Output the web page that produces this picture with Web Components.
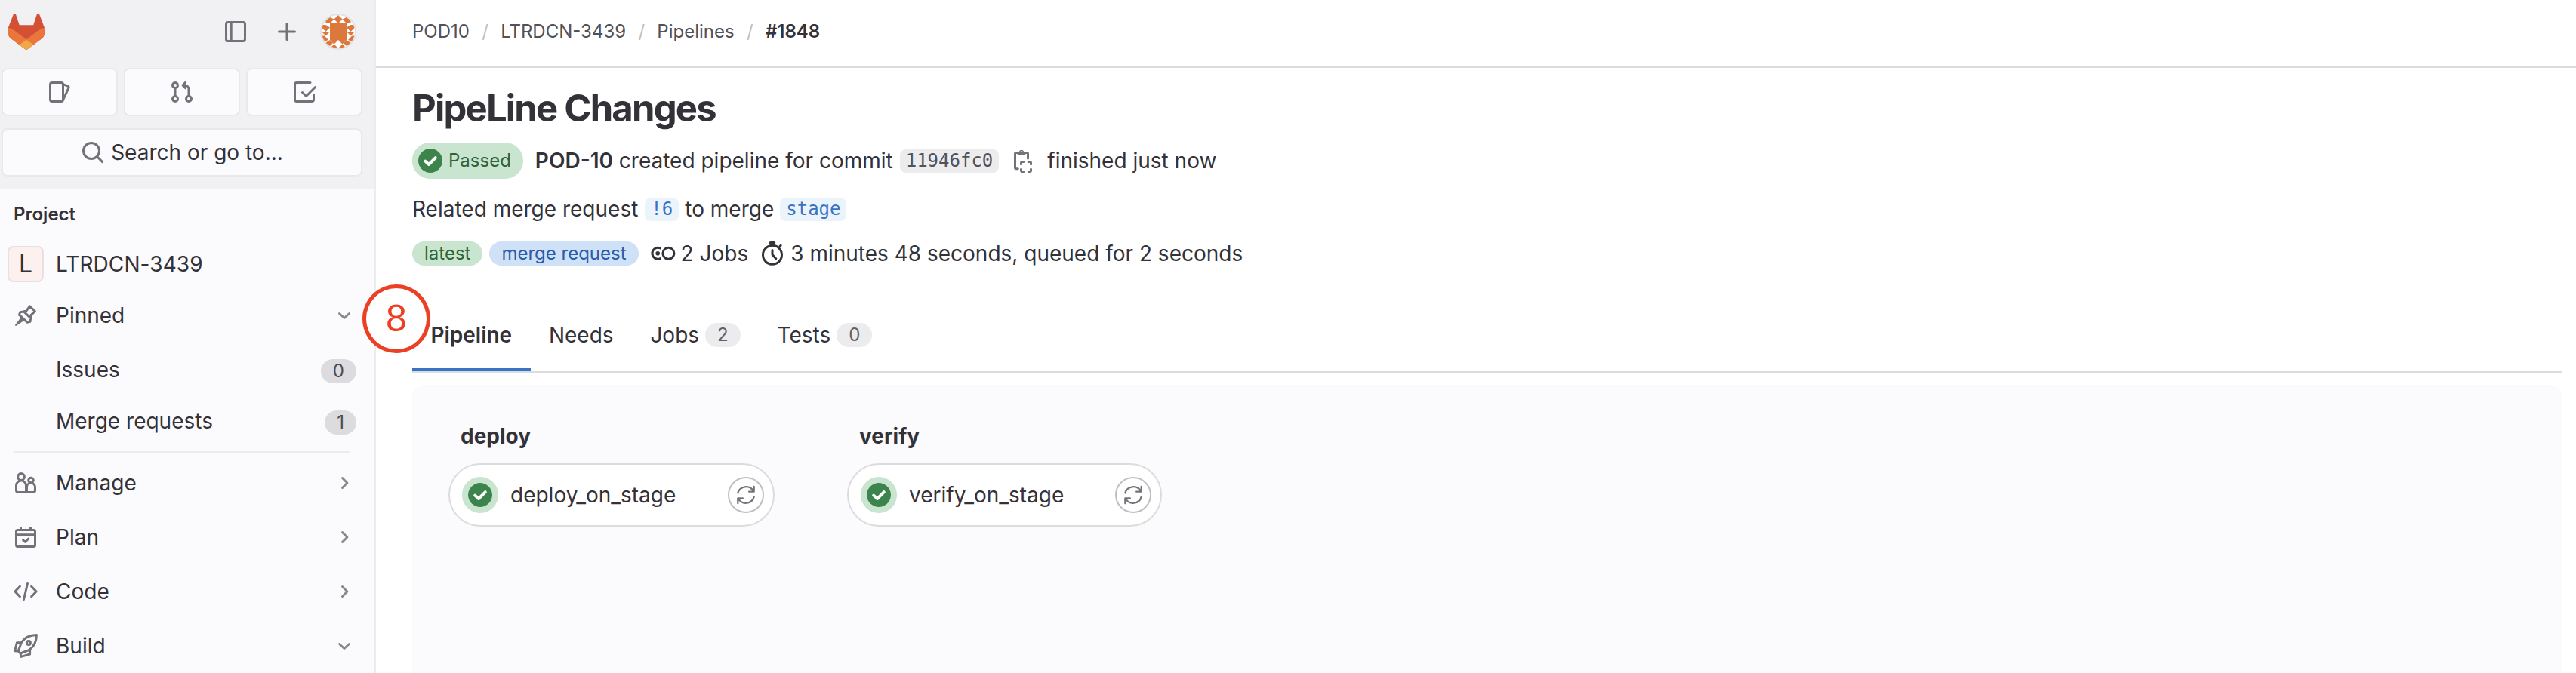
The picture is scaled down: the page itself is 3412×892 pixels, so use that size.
<!DOCTYPE html>
<html lang="en">
<head>
<meta charset="utf-8">
<title>PipeLine Changes</title>
<style>
  body {
    margin: 0;
    background: #fff;
    color: #333238;
    font-family: Inter, "Liberation Sans", sans-serif;
    font-size: 28px;
    line-height: 40px;
  }
</style>
</head>
<body>
<gl-app></gl-app>

<script>
// inner markup of every icon, all on a 16x16 grid
const ICONS = {
  'panel': '<rect x="1.75" y="1.75" width="12.5" height="12.5" rx="1.25"/><path d="M5.1 2v12"/>',
  'plus': '<path d="M8 2.75v10.5M2.75 8h10.5"/>',
  'issues': '<rect x="1.75" y="1.75" width="8.5" height="12.5" rx="1.25"/><path d="m10.5 2.9 2.9 1.2a1 1 0 0 1 .5 1.3l-3.3 7.2"/>',
  'merge': '<circle cx="3.5" cy="3.5" r="1.75"/><circle cx="3.5" cy="12.5" r="1.75"/><circle cx="12.5" cy="12.5" r="1.75"/><path d="M3.5 5.25v5.5M12.5 10.75V6A2.5 2.5 0 0 0 10 3.5H8.7M10.3 1.7 8.5 3.5l1.8 1.8"/>',
  'todo': '<path d="M12 1.75H3A1.25 1.25 0 0 0 1.75 3v10c0 .7.55 1.25 1.25 1.25h10c.7 0 1.25-.55 1.25-1.25v-3.2M6.75 8.25l2.5 2.5 6-6"/>',
  'search': '<circle cx="7" cy="7" r="5.25"/><path d="m10.9 10.9 3.4 3.4"/>',
  'pin': '<path d="m10.7 1.9 3.5 3.4-2.6 2.4-.6 4.4-2 .5-5.3-5 .7-1.7 4-.8zM7 5.7l4.6 4.4"/><path d="m1.5 14.5 3.9-5.1 1.5 1.4z" fill="currentColor" stroke-width="1"/>',
  'users': '<circle cx="5" cy="4" r="2.2"/><path d="M1.75 13V9.8a3.25 3.25 0 0 1 6.5 0v4.4H3A1.25 1.25 0 0 1 1.75 13zM8.8 14.25h4.2c.7 0 1.25-.55 1.25-1.25v-2.2a2.75 2.75 0 0 0-5.5 0v3.2"/><circle cx="11.5" cy="6.3" r="1.65"/>',
  'calendar': '<rect x="1.75" y="3.25" width="12.5" height="11" rx="1"/><path d="M1.75 6.4h12.5M4.75 1.75v1.5M11.25 1.75v1.5M6.3 9.9l1.4 1.3 2.2-2.2"/>',
  'code': '<path d="M4.2 4.6.95 8l3.25 3.4M11.8 4.6 15.05 8l-3.25 3.4M9.25 2.75l-2.5 10.5"/>',
  'rocket': '<path d="M5.2 5.7C7.3 2.6 10.6.9 15.2.8c0 4.4-1.7 7.7-4.8 9.9L4.5 13 3.1 11.4zM5.2 5.7l-3 .2L.8 11.4l2.3.1M10.8 10.6v2.9L5 15.2 4.5 13"/><circle cx="10" cy="6" r="1.2"/>',
  'chevron-down': '<path d="m4.75 6.75 3.25 3 3.25-3"/>',
  'chevron-right': '<path d="m6.75 4.75 3.2 3.25-3.2 3.25"/>',
  'copy': '<path d="M4.6 13.4H3.5a.75.75 0 0 1-.75-.75V3.45a.75.75 0 0 1 .75-.75h7a.75.75 0 0 1 .75.75v3.1"/><path d="M4.4 4.4V2h1a1.7 1.7 0 0 1 3.2 0h1v2.4zM7 1.6a.85.85 0 1 0 0 1.7.85.85 0 0 0 0-1.7z" fill="currentColor" fill-rule="evenodd" stroke="none"/><path d="M6.75 10.4v-.9c0-.4.35-.75.75-.75h.9M11.6 8.75h.9c.4 0 .75.35.75.75v.9M13.25 13.6v.9c0 .4-.35.75-.75.75h-.9M8.4 15.25h-.9a.75.75 0 0 1-.75-.75v-.9"/>',
  'jobs': '<circle cx="11.7" cy="7.9" r="3.75"/><path d="M6.3 4.5a3.75 3.75 0 1 0 0 6.8"/><circle cx="4.6" cy="7.9" r="1.4" fill="currentColor" stroke="none"/>',
  'timer': '<circle cx="8" cy="8.9" r="6.25"/><path d="M8 5.8v2.9l2.4 2.7M12.9 3.3l.7-.7"/><path d="M6.8.9h2.4M8 1v1.4" stroke-width="1.9"/>',
  'retry': '<path d="M2.3 6.6a6 6 0 0 1 11-1.3M13.7 2v3.7H10.2M13.7 9.4a6 6 0 0 1-11 1.3M2.3 14v-3.7h3.5"/>',
  'check': '<path d="m4.6 8.3 2.4 2.2 4.4-4.4"/>'
};

class GlIcon extends HTMLElement {
  connectedCallback() {
    const size = this.getAttribute('size') || 32;
    const weight = this.getAttribute('weight') || 1.5;
    this.attachShadow({ mode: 'open' }).innerHTML = `
      <style>
        :host { display: block; flex: none; width: ${size}px; height: ${size}px; color: #737278; }
        svg { display: block; overflow: visible; }
      </style>
      <svg width="${size}" height="${size}" viewBox="0 0 16 16" fill="none" stroke="currentColor"
        stroke-width="${weight}" stroke-linecap="round" stroke-linejoin="round">${ICONS[this.getAttribute('name')]}</svg>`;
  }
}

class GlLogo extends HTMLElement {
  connectedCallback() {
    this.attachShadow({ mode: 'open' }).innerHTML = `
      <style>:host { display: block; width: 50px; height: 48px; } svg { display: block; }</style>
      <svg width="50" height="48" viewBox="0 0 25 24">
        <path fill="#d35034" d="m24.507 9.5-.034-.09L21.082.562a.896.896 0 0 0-1.694.091l-2.29 7.01H7.825L5.535.653a.898.898 0 0 0-1.694-.09L.451 9.411.416 9.5a6.297 6.297 0 0 0 2.09 7.278l.012.01.03.022 5.16 3.867 2.56 1.935 1.554 1.176a1.051 1.051 0 0 0 1.268 0l1.555-1.176 2.56-1.935 5.197-3.89.014-.01A6.297 6.297 0 0 0 24.507 9.5Z"/>
        <path fill="#ea763c" d="m24.507 9.5-.034-.09a11.44 11.44 0 0 0-4.56 2.051l-7.447 5.632 4.742 3.584 5.197-3.89.014-.01A6.297 6.297 0 0 0 24.507 9.5Z"/>
        <path fill="#efa747" d="m7.707 20.677 2.56 1.935 1.555 1.176a1.051 1.051 0 0 0 1.268 0l1.555-1.176 2.56-1.935-4.743-3.584-4.755 3.584Z"/>
        <path fill="#ea763c" d="M5.01 11.461a11.43 11.43 0 0 0-4.56-2.05L.416 9.5a6.297 6.297 0 0 0 2.09 7.278l.012.01.03.022 5.16 3.867 4.745-3.584-7.444-5.632Z"/>
      </svg>`;
  }
}

class GlIdenticon extends HTMLElement {
  connectedCallback() {
    this.attachShadow({ mode: 'open' }).innerHTML = `
      <style>
        :host { display: block; box-sizing: border-box; width: 48px; height: 48px; border: 2px solid #e2e1e6; border-radius: 50%; overflow: hidden; background: #fff; }
        svg { display: block; }
      </style>
      <svg width="44" height="44" viewBox="0 0 44 44" fill="#dd783c">
        <path d="M11 11h22v22l-5.5 5.5L22 33l-5.5 5.5L11 33z"/>
        <path d="m22 0 5.5 5.5L22 11l-5.5-5.5zM11 3l5.5 2.5L11 11H5.5V7zM33 3l-5.5 2.5L33 11h5.5V7zM0 13h5.5l5.500 3.5L5.5 22 0 16.5zM44 13h-5.5L33 16.5l5.5 5.5 5.5-5.5zM0 22h11l-5.500 5.500zM44 22H33l5.500 5.500zM0 27.5h4L9 33l-6 2zM44 27.5h-4L35 33l6 2zM11 33l4 4-5 5-5-5zM33 33l-4 4 5 5 5-5zM16.5 38.500 22 44H11zM27.5 38.500 22 44h11z"/>
      </svg>`;
  }
}

// small rounded counter, used in the side menu and in the tabs
class GlCount extends HTMLElement {
  connectedCallback() {
    this.attachShadow({ mode: 'open' }).innerHTML = `
      <style>
        :host { display: block; box-sizing: border-box; height: 32px; padding: 0 16px; border-radius: 16px; background: var(--count-bg, #dcdcde); color: var(--count-color, #4c4b51); font-size: 24px; line-height: 32px; font-weight: 400; }
      </style>
      <slot></slot>`;
  }
}

class GlNavItem extends HTMLElement {
  connectedCallback() {
    const icon = this.getAttribute('icon');
    const arrow = this.getAttribute('arrow');
    const count = this.getAttribute('count');
    this.attachShadow({ mode: 'open' }).innerHTML = `
      <style>
        :host { display: flex; align-items: center; height: var(--row, 72px); padding: 0 8px 0 18px; }
        .lead { width: 56px; flex: none; }
        .label { flex: 1; }
        .arrow { color: #89888d; }
        gl-count { position: relative; top: 2px; }
      </style>
      <div class="lead">${icon ? `<gl-icon name="${icon}"></gl-icon>` : ''}</div>
      <div class="label"><slot></slot></div>
      ${arrow ? `<gl-icon class="arrow" name="chevron-${arrow}"></gl-icon>` : ''}
      ${count ? `<gl-count>${count}</gl-count>` : ''}`;
  }
}

class GlSidebar extends HTMLElement {
  connectedCallback() {
    this.attachShadow({ mode: 'open' }).innerHTML = `
      <style>
        :host { display: block; box-sizing: border-box; width: 498px; height: 892px; overflow: hidden; background: #fbfafd; border-right: 2px solid #ececef; }
        header { box-sizing: border-box; height: 250px; background: #f1f0f3; padding: 18px 16px 0 2px; }
        .brand { display: flex; align-items: center; padding: 0 8px; height: 48px; }
        .brand gl-icon { margin-right: 36px; }
        .brand gl-icon + gl-icon { margin-right: 28px; }
        .space { flex: 1; }
        .tiles { display: grid; grid-template-columns: 1fr 1fr 1fr; gap: 8px; margin-top: 24px; }
        .tile { display: flex; align-items: center; justify-content: center; box-sizing: border-box; height: 64px; background: #fbfafd; border: 2px solid #e9e8ec; border-radius: 8px; }
        .search { margin-top: 16px; gap: 8px; }
        h2 { margin: 0; padding: 14px 18px 0; font-size: 24px; line-height: 40px; font-weight: 600; }
        .project { display: flex; align-items: center; height: 48px; padding: 0 10px; margin-top: 22px; gap: 16px; }
        .project span { letter-spacing: 0.1px; }
        .letter { box-sizing: border-box; width: 48px; height: 48px; border: 2px solid #ebdfdf; border-radius: 8px; background: #fcf1ef; text-align: center; font-size: 32px; line-height: 44px; }
        .pinned { --row: 68px; margin-top: 10px; padding-right: 16px; }
        hr { margin: 10px 32px 0 18px; border: 0; height: 2px; background: #ececef; }
        .menu { margin-top: 4px; padding-right: 16px; }
      </style>
      <header>
        <div class="brand">
          <gl-logo></gl-logo><span class="space"></span>
          <gl-icon name="panel"></gl-icon><gl-icon name="plus"></gl-icon>
          <gl-identicon></gl-identicon>
        </div>
        <div class="tiles">
          <div class="tile"><gl-icon name="issues"></gl-icon></div>
          <div class="tile"><gl-icon name="merge"></gl-icon></div>
          <div class="tile"><gl-icon name="todo"></gl-icon></div>
        </div>
        <div class="tile search"><gl-icon name="search"></gl-icon><span>Search or go to...</span></div>
      </header>
      <h2>Project</h2>
      <div class="project"><div class="letter">L</div><span>LTRDCN-3439</span></div>
      <div class="pinned">
        <gl-nav-item icon="pin" arrow="down">Pinned</gl-nav-item>
        <gl-nav-item style="--row: 76px" count="0">Issues</gl-nav-item>
        <gl-nav-item style="--row: 60px" count="1">Merge requests</gl-nav-item>
      </div>
      <hr>
      <nav class="menu">
        <gl-nav-item icon="users" arrow="right">Manage</gl-nav-item>
        <gl-nav-item icon="calendar" arrow="right">Plan</gl-nav-item>
        <gl-nav-item icon="code" arrow="right">Code</gl-nav-item>
        <gl-nav-item icon="rocket" arrow="down">Build</gl-nav-item>
      </nav>`;
  }
}

class GlBreadcrumbs extends HTMLElement {
  connectedCallback() {
    this.attachShadow({ mode: 'open' }).innerHTML = `
      <style>
        :host { display: flex; box-sizing: border-box; height: 90px; padding: 22px 48px 0; gap: 16.3px; border-bottom: 2px solid #dcdcde; color: #535158; font-size: 24px; }
        i { font-style: normal; color: #bfbfc3; }
        b { font-weight: 600; color: #333238; }
      </style>
      <span>POD10</span><i>/</i><span>LTRDCN-3439</span><i>/</i><span>Pipelines</span><i>/</i><b>#1848</b>`;
  }
}

class GlBadge extends HTMLElement {
  connectedCallback() {
    this.attachShadow({ mode: 'open' }).innerHTML = `
      <style>
        :host { display: block; height: 32px; padding: 0 16px; border-radius: 16px; font-size: 24px; line-height: 32px; background: #c9e5cf; color: #2f6339; }
        :host([variant="info"]) { background: #cfe1f7; color: #2a5caa; }
      </style>
      <slot></slot>`;
  }
}

class GlCode extends HTMLElement {
  connectedCallback() {
    this.attachShadow({ mode: 'open' }).innerHTML = `
      <style>
        :host { display: block; height: 31px; padding: 0 8px; border-radius: 8px; font: 24px/31px "DejaVu Sans Mono", monospace; background: #ececef; color: #535158; }
        :host([link]) { background: #ebf3fb; color: #3973c6; }
      </style>
      <slot></slot>`;
  }
}

// green disc with a tick and a paler ring around it
class GlStatus extends HTMLElement {
  connectedCallback() {
    this.attachShadow({ mode: 'open' }).innerHTML = `
      <style>
        :host { display: block; flex: none; border-radius: 50%; border: 8px solid #c9e5cf; }
        div { width: 32px; height: 32px; border-radius: 50%; background: #3c844c; }
        gl-icon { color: #fff; }
      </style>
      <div><gl-icon name="check" weight="2"></gl-icon></div>`;
  }
}

class GlPipelineHeader extends HTMLElement {
  connectedCallback() {
    this.attachShadow({ mode: 'open' }).innerHTML = `
      <style>
        :host { display: block; padding: 0 48px; }
        h1 { margin: 0; padding-top: 24px; font-size: 49px; line-height: 60px; font-weight: 700; letter-spacing: -1.8px; }
        .row { display: flex; align-items: center; white-space: nowrap; }
        .pill { display: flex; align-items: center; height: 48px; border-radius: 24px; background: #c9e5cf; color: #2f6339; font-size: 24px; padding-right: 16px; margin-right: 16px; }
        b { font-weight: 600; }
        .commit { height: 48px; margin-top: 15px; }
        .related { height: 40px; margin-top: 20px; }
        .stats { height: 40px; margin-top: 19px; }
        .stats gl-icon { color: #333238; }
      </style>
      <h1>PipeLine Changes</h1>
      <div class="row commit">
        <div class="pill"><gl-status></gl-status><span>Passed</span></div>
        <span><b>POD-10</b> created pipeline for commit</span>
        <gl-code style="margin: 0 16px 0 9px">11946fc0</gl-code>
        <gl-icon name="copy"></gl-icon>
        <span style="margin-left: 16px">finished just now</span>
      </div>
      <div class="row related">
        <span>Related merge request</span>
        <gl-code link style="margin: 0 8px 0 9px">!6</gl-code>
        <span>to merge</span>
        <gl-code link style="margin-left: 8px">stage</gl-code>
      </div>
      <div class="row stats">
        <gl-badge>latest</gl-badge>
        <gl-badge variant="info" style="margin: 0 16px 0 9px">merge request</gl-badge>
        <gl-icon name="jobs"></gl-icon>
        <span style="margin: 0 16px 0 8px">2 Jobs</span>
        <gl-icon name="timer"></gl-icon>
        <span style="margin-left: 8px">3 minutes 48 seconds, queued for 2 seconds</span>
      </div>`;
  }
}

class GlTab extends HTMLElement {
  connectedCallback() {
    const count = this.getAttribute('count');
    this.attachShadow({ mode: 'open' }).innerHTML = `
      <style>
        :host { display: flex; align-items: center; gap: 8px; box-sizing: border-box; height: 96px; padding: 0 24.4px; --count-bg: #ececef; --count-color: #626168; }
        :host([active]) { font-weight: 600; box-shadow: inset 0 -4px #3973c6; }
      </style>
      <slot></slot>${count ? `<gl-count>${count}</gl-count>` : ''}`;
  }
}

class GlJob extends HTMLElement {
  connectedCallback() {
    this.attachShadow({ mode: 'open' }).innerHTML = `
      <style>
        :host { display: block; }
        h3 { margin: 0 0 16px 16px; font-size: 28px; line-height: 40px; font-weight: 700; }
        .job { display: flex; align-items: center; box-sizing: border-box; height: 84px; padding: 0 12px 0 16px; border: 2px solid #dcdcde; border-radius: 42px; background: #fff; }
        .name { flex: 1; margin-left: 16px; }
        .retry { display: flex; align-items: center; justify-content: center; box-sizing: border-box; width: 48px; height: 48px; border: 2px solid #bfbfc3; border-radius: 50%; }
      </style>
      <h3>${this.getAttribute('stage')}</h3>
      <div class="job">
        <gl-status></gl-status>
        <span class="name"><slot></slot></span>
        <span class="retry"><gl-icon name="retry" size="30" weight="1.2"></gl-icon></span>
      </div>`;
  }
}

class GlMarker extends HTMLElement {
  connectedCallback() {
    this.attachShadow({ mode: 'open' }).innerHTML = `
      <style>
        :host { position: absolute; left: 480px; top: 377px; box-sizing: border-box; width: 90px; height: 91px; border: 5px solid #ec4025; border-radius: 50%; background: #fff; color: #ec4025; font: 50px/80px "Liberation Sans", sans-serif; text-align: center; }
      </style>
      <slot></slot>`;
  }
}

class GlApp extends HTMLElement {
  connectedCallback() {
    this.attachShadow({ mode: 'open' }).innerHTML = `
      <style>
        :host { display: grid; grid-template-columns: 498px 1fr; height: 892px; overflow: hidden; }
        main { display: flex; flex-direction: column; min-width: 0; }
        .tabs { display: flex; margin: 40px 18px 0 48px; border-bottom: 2px solid #dcdcde; }
        .graph { display: flex; align-items: flex-start; gap: 96px; flex: 1; margin: 16px 18px 0 48px; padding: 48px 48px 0; border-radius: 16px 16px 0 0; background: #fbfafd; }
      </style>
      <gl-sidebar></gl-sidebar>
      <main>
        <gl-breadcrumbs></gl-breadcrumbs>
        <gl-pipeline-header></gl-pipeline-header>
        <div class="tabs">
          <gl-tab active>Pipeline</gl-tab>
          <gl-tab>Needs</gl-tab>
          <gl-tab count="2">Jobs</gl-tab>
          <gl-tab count="0">Tests</gl-tab>
        </div>
        <div class="graph">
          <gl-job stage="deploy" style="width: 432px">deploy_on_stage</gl-job>
          <gl-job stage="verify" style="width: 417px">verify_on_stage</gl-job>
        </div>
      </main>
      <gl-marker>8</gl-marker>`;
  }
}

customElements.define('gl-icon', GlIcon);
customElements.define('gl-logo', GlLogo);
customElements.define('gl-identicon', GlIdenticon);
customElements.define('gl-count', GlCount);
customElements.define('gl-nav-item', GlNavItem);
customElements.define('gl-sidebar', GlSidebar);
customElements.define('gl-breadcrumbs', GlBreadcrumbs);
customElements.define('gl-badge', GlBadge);
customElements.define('gl-code', GlCode);
customElements.define('gl-status', GlStatus);
customElements.define('gl-pipeline-header', GlPipelineHeader);
customElements.define('gl-tab', GlTab);
customElements.define('gl-job', GlJob);
customElements.define('gl-marker', GlMarker);
customElements.define('gl-app', GlApp);
</script>
</body>
</html>
